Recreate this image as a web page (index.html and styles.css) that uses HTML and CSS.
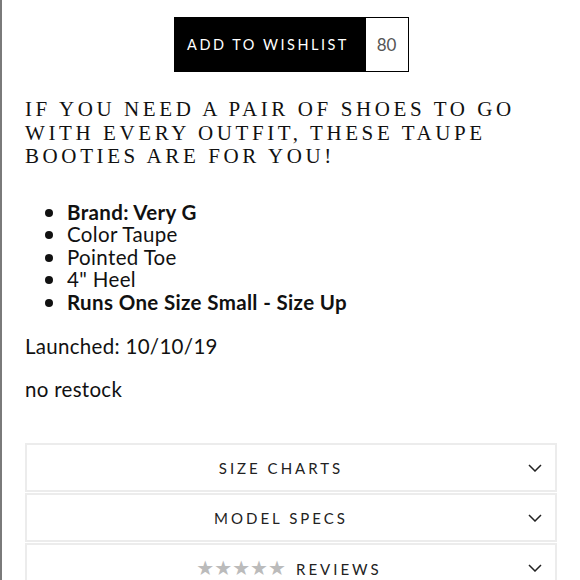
FILE: index.html
```html
<!DOCTYPE html>
<html lang="en">
<head>
    <meta charset="UTF-8">
    <meta name="viewport" content="width=device-width, initial-scale=1.0">
    <title>Taupe Booties</title>
    <link rel="stylesheet" href="styles.css">
</head>
<body>
    <div class="page">
        <div class="wishlist-row">
            <button class="wishlist-btn">
                <span class="wishlist-label">ADD TO WISHLIST</span>
                <span class="wishlist-count">80</span>
            </button>
        </div>

        <h1 class="headline">If you need a pair of shoes to go with every outfit, these taupe booties are for you!</h1>

        <ul class="features">
            <li><strong>Brand: Very G</strong></li>
            <li>Color Taupe</li>
            <li>Pointed Toe</li>
            <li>4" Heel</li>
            <li><strong>Runs One Size Small - Size Up</strong></li>
        </ul>

        <p class="note">Launched: 10/10/19</p>
        <p class="note">no restock</p>

        <div class="accordion">
            <div class="acc-row">
                <span class="acc-title">SIZE CHARTS</span>
                <svg class="chevron" viewBox="0 0 14 8" width="14" height="8"><path d="M1 1l6 6 6-6" fill="none" stroke="#222" stroke-width="1.5"/></svg>
            </div>
            <div class="acc-row">
                <span class="acc-title">MODEL SPECS</span>
                <svg class="chevron" viewBox="0 0 14 8" width="14" height="8"><path d="M1 1l6 6 6-6" fill="none" stroke="#222" stroke-width="1.5"/></svg>
            </div>
            <div class="acc-row reviews">
                <span class="acc-title"><span class="stars">★★★★★</span>REVIEWS</span>
                <svg class="chevron" viewBox="0 0 14 8" width="14" height="8"><path d="M1 1l6 6 6-6" fill="none" stroke="#222" stroke-width="1.5"/></svg>
            </div>
        </div>
    </div>
</body>
</html>
```

FILE: styles.css
```css
body {
    margin: 0;
    font-family: Lato, "Open Sans", sans-serif;
    color: #111;
    background: #fff;
}
.page {
    border-left: 2px solid #7a7a7a;
    min-height: 580px;
    padding: 17px 23px 0 23px;
}
.wishlist-row {
    display: flex;
    justify-content: center;
}
.wishlist-btn {
    display: flex;
    height: 55px;
    padding: 0;
    border: 1px solid #000;
    background: #000;
    font-family: Lato, sans-serif;
    cursor: pointer;
}
.wishlist-label {
    display: flex;
    align-items: center;
    width: 191px;
    justify-content: center;
    padding-right: 4px;
    box-sizing: border-box;
    color: #fff;
    font-size: 14.5px;
    letter-spacing: 2.5px;
    font-weight: normal;
}
.wishlist-count {
    display: flex;
    align-items: center;
    justify-content: center;
    width: 42px;
    background: #fff;
    color: #555;
    font-size: 17px;
}
.headline {
    margin: 26px 0 0 0;
    font-family: "Liberation Serif", serif;
    font-weight: normal;
    font-size: 21px;
    line-height: 23.5px;
    letter-spacing: 3.6px;
    text-transform: uppercase;
    color: #111;
}
.features {
    list-style: none;
    margin: 32px 0 0 0;
    padding-left: 42px;
    font-size: 20.5px;
    line-height: 22.5px;
    letter-spacing: 0.35px;
}
.features li {
    position: relative;
}
.features li::before {
    content: "";
    position: absolute;
    left: -22px;
    top: 8px;
    width: 8px;
    height: 8px;
    border-radius: 50%;
    background: #111;
}
.note {
    margin: 21px 0 0 0;
    font-size: 20.5px;
    line-height: 24px;
    letter-spacing: 0.3px;
}
.note + .note {
    margin-top: 19px;
}
.accordion {
    margin-top: 42px;
}
.acc-row {
    position: relative;
    display: flex;
    align-items: center;
    justify-content: center;
    height: 45px;
    padding-right: 20px;
    border: 2px solid #ececec;
    margin-bottom: 1px;
}
.acc-row.reviews {
    padding-right: 4px;
}
.acc-title {
    font-size: 15px;
    letter-spacing: 3px;
    color: #222;
}
.stars {
    color: #bbb;
    letter-spacing: 0;
    font-size: 20px;
    margin-right: 10px;
    font-family: "DejaVu Sans", sans-serif;
}
.chevron {
    position: absolute;
    right: 13px;
    top: 19px;
}
```
